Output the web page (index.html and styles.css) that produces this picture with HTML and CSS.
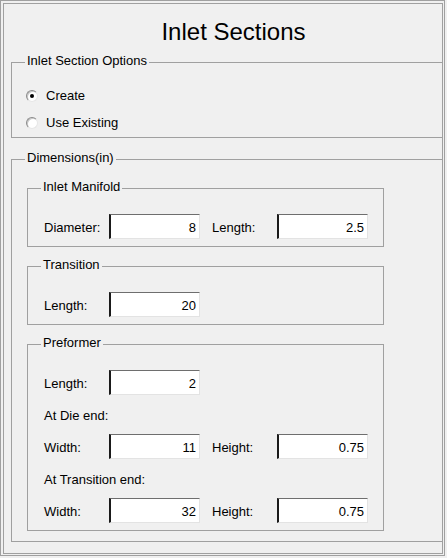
FILE: index.html
```html
<!DOCTYPE html>
<html>
  <head>
    <meta charset="utf-8">
    <title>Inlet Sections</title>
    <link rel="stylesheet" href="styles.css">
  </head>
  <body>
    <div class="frame">
      <div class="pane">
        <h1 class="title">Inlet Sections</h1>

        <fieldset class="group outer options">
          <legend>Inlet Section Options</legend>
          <div class="radioRow"><span class="radio checked"></span>Create</div>
          <div class="radioRow"><span class="radio"></span>Use Existing</div>
        </fieldset>

        <fieldset class="group outer dims">
          <legend>Dimensions(in)</legend>

          <fieldset class="group inner">
            <legend>Inlet Manifold</legend>
            <div class="fieldRow">
              <span class="lbl">Diameter:</span><input class="num" type="text" value="8" readonly>
              <span class="lbl lbl2">Length:</span><input class="num" type="text" value="2.5" readonly>
            </div>
          </fieldset><!-- Inlet Manifold -->

          <fieldset class="group inner">
            <legend>Transition</legend>
            <div class="fieldRow">
              <span class="lbl">Length:</span><input class="num" type="text" value="20" readonly>
            </div>
          </fieldset><!-- Transition -->

          <fieldset class="group inner">
            <legend>Preformer</legend>
            <div class="fieldRow">
              <span class="lbl">Length:</span><input class="num" type="text" value="2" readonly>
            </div>
            <div class="note">At Die end:</div>
            <div class="fieldRow">
              <span class="lbl">Width:</span><input class="num" type="text" value="11" readonly>
              <span class="lbl lbl2">Height:</span><input class="num" type="text" value="0.75" readonly>
            </div>
            <div class="note">At Transition end:</div>
            <div class="fieldRow">
              <span class="lbl">Width:</span><input class="num" type="text" value="32" readonly>
              <span class="lbl lbl2">Height:</span><input class="num" type="text" value="0.75" readonly>
            </div>
          </fieldset><!-- Preformer -->
        </fieldset><!-- dims -->
      </div>
    </div>
  </body>
</html>
```

FILE: styles.css
```css
body {
  margin: 0;
  background-color: #f0f0f0;
  color: #000;
  font-family: "Liberation Sans", Arial, sans-serif;
  font-size: 13px;
  line-height: 15px;
}
.frame {
  width: 445px;
  height: 556px;
  box-sizing: border-box;
  border: 1px solid #a0a0a0;
  padding: 2px 1px 1px 2px;
}
.pane {
  height: 100%;
  box-sizing: border-box;
  border: 1px solid #a0a0a0;
  overflow: hidden;
}
.title {
  margin: 14px 0 0 0;
  padding: 0 0 0 21px;
  text-align: center;
  font-size: 24px;
  line-height: 28px;
  font-weight: normal;
}
.group {
  margin: 0;
  min-width: 0;
  box-sizing: border-box;
  border: 1px solid #a0a0a0;
}
.group legend {
  margin-left: 13px;
  padding: 0 2px 4px 2px;
  line-height: 15px;
}
.outer {
  width: 470px;
  margin-left: 7px;
}
.options {
  margin-top: 7px;
  padding: 16px 0 7px 0;
}
.dims {
  margin-top: 12px;
  padding: 10px 0 10px 0;
}
.inner {
  width: 357px;
  margin: 10px 0 0 15px;
  padding: 16px 0 7px 0;
}
.dims legend + .inner {
  margin-top: 0;
}
.radioRow {
  display: flex;
  align-items: center;
  height: 15px;
  padding-left: 14px;
}
.radioRow + .radioRow {
  margin-top: 12px;
}
.radio {
  display: flex;
  align-items: center;
  justify-content: center;
  width: 12px;
  height: 12px;
  box-sizing: border-box;
  margin-right: 8px;
  border-radius: 50%;
  border: 1px solid;
  border-color: #8a8a8a #e6e6e6 #e6e6e6 #8a8a8a;
  background-color: #fff;
  box-shadow: inset 1px 1px 0 #c8c8c8;
}
.radio.checked:after {
  content: '';
  display: block;
  width: 4px;
  height: 4px;
  border-radius: 50%;
  background-color: #000;
}
.fieldRow {
  display: flex;
  align-items: center;
  height: 25px;
  padding-left: 16px;
}
.lbl {
  width: 65px;
  padding-top: 1px;
}
.lbl2 {
  margin-left: 12px;
}
.num {
  width: 91px;
  height: 25px;
  margin: 0;
  box-sizing: border-box;
  padding: 1px 3px 0 0;
  border-style: solid;
  border-width: 1px 1px 1px 2px;
  border-color: #6e6e6e #e3e3e3 #e3e3e3 #1a1a1a;
  background-color: #fff;
  color: #000;
  font-family: "Liberation Sans", Arial, sans-serif;
  font-size: 13px;
  text-align: right;
  outline: none;
}
.note {
  margin: 13px 0 11px 0;
  padding-left: 16px;
}
```
